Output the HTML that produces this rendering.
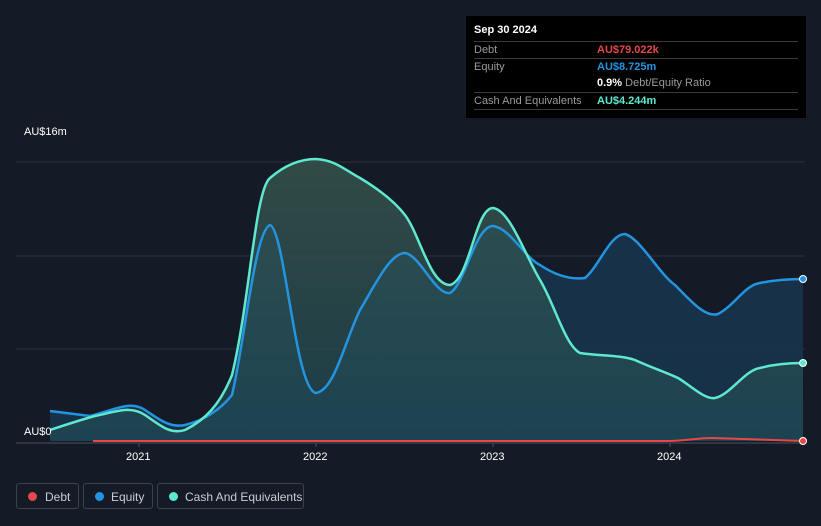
<!DOCTYPE html>
<html><head><style>
body{margin:0;background:#151b26;font-family:"Liberation Sans",sans-serif;}
.wrap{position:relative;width:821px;height:526px;overflow:hidden;background:#151b26}
.tt{position:absolute;left:466px;top:16px;width:340px;height:102px;background:#000;color:#fff;font-size:11px}
.tt .row{position:absolute;left:8px;width:324px;border-top:1px solid #3a3a3a;height:16px;line-height:16px;color:#9a9a9a}
.tt .v{position:absolute;left:123px;font-weight:bold}
.leg{position:absolute;top:483px;height:26px;border:1px solid #3c4350;border-radius:3px;color:#c9ccd2;font-size:12px;line-height:26px;box-sizing:border-box}
.leg i{position:absolute;top:8px;left:11px;width:9px;height:9px;border-radius:50%}
</style></head><body><div class="wrap">
<svg width="821" height="526" style="position:absolute;left:0;top:0">
<defs><linearGradient id="cg" x1="0" y1="0" x2="0" y2="1"><stop offset="0" stop-color="#3a5a50" stop-opacity=".75"/><stop offset="1" stop-color="#1f4a55" stop-opacity=".7"/></linearGradient></defs>
<g stroke="#2a303b" stroke-width="1"><line x1="16" y1="162" x2="805" y2="162"/><line x1="16" y1="256" x2="805" y2="256"/><line x1="16" y1="349" x2="805" y2="349"/></g>
<path d="M50,411 L90,416 C115,410 130,400 145,410 C160,420 170,428 185,425 C205,420 220,410 232,395 C245,340 255,230 270,225 C285,230 295,390 316,393 C335,390 345,340 360,310 C375,285 390,253 405,253 C420,255 435,295 450,293 C465,285 475,226 493,226 C510,228 525,258 540,265 C555,275 570,280 585,278 C600,265 610,234 625,234 C640,238 660,275 675,285 C690,300 705,318 718,314 C735,305 745,285 760,283 C775,280 790,279 803,279 L803,441 L50,441Z" fill="#17344d" opacity=".9"/>
<path d="M50,430 C65,425 80,420 95,416 C115,412 130,405 145,415 C160,425 170,435 185,430 C205,420 220,405 232,375 C250,300 255,190 270,178 C285,165 300,159 316,159 C335,160 345,170 360,178 C380,190 395,202 405,215 C420,235 430,285 450,285 C470,280 475,208 493,208 C510,210 525,255 540,280 C555,305 565,345 580,353 C600,356 620,355 635,360 C650,367 665,372 678,378 C690,385 705,400 715,398 C730,395 745,370 760,368 C775,364 790,363 803,363 L803,441 L50,441Z" fill="url(#cg)"/>
<path d="M50,411 L90,416 C115,410 130,400 145,410 C160,420 170,428 185,425 C205,420 220,410 232,395 C245,340 255,230 270,225 C285,230 295,390 316,393 C335,390 345,340 360,310 C375,285 390,253 405,253 C420,255 435,295 450,293 C465,285 475,226 493,226 C510,228 525,258 540,265 C555,275 570,280 585,278 C600,265 610,234 625,234 C640,238 660,275 675,285 C690,300 705,318 718,314 C735,305 745,285 760,283 C775,280 790,279 803,279" fill="none" stroke="#2394e0" stroke-width="2.5"/>
<path d="M50,430 C65,425 80,420 95,416 C115,412 130,405 145,415 C160,425 170,435 185,430 C205,420 220,405 232,375 C250,300 255,190 270,178 C285,165 300,159 316,159 C335,160 345,170 360,178 C380,190 395,202 405,215 C420,235 430,285 450,285 C470,280 475,208 493,208 C510,210 525,255 540,280 C555,305 565,345 580,353 C600,356 620,355 635,360 C650,367 665,372 678,378 C690,385 705,400 715,398 C730,395 745,370 760,368 C775,364 790,363 803,363" fill="none" stroke="#5ee8cf" stroke-width="2.5"/>
<path d="M93,441 L670,441 C690,440 700,438 712,438 C740,439 770,440 803,441" fill="none" stroke="#e54848" stroke-width="2"/>
<line x1="16" y1="443" x2="805" y2="443" stroke="#4a505a"/>
<g stroke="#4a505a"><line x1="139" y1="443" x2="139" y2="447"/><line x1="316" y1="443" x2="316" y2="447"/><line x1="493" y1="443" x2="493" y2="447"/><line x1="670" y1="443" x2="670" y2="447"/></g>
<circle cx="803" cy="279" r="3.5" fill="#2394e0" stroke="#fff" stroke-width="1"/>
<circle cx="803" cy="363" r="3.5" fill="#5ee8cf" stroke="#fff" stroke-width="1"/>
<circle cx="803" cy="441" r="3.5" fill="#e54848" stroke="#fff" stroke-width="1"/>
<g font-size="11" fill="#fff" font-family="Liberation Sans"><text x="24" y="135">AU$16m</text><text x="24" y="435">AU$0</text>
<text x="126" y="460">2021</text><text x="303" y="460">2022</text><text x="480" y="460">2023</text><text x="657" y="460">2024</text></g>
</svg>
<div class="tt">
<div style="position:absolute;left:8px;top:8px;font-weight:bold;font-size:11px">Sep 30 2024</div>
<div class="row" style="top:25px">Debt<span class="v" style="color:#e54848">AU$79.022k</span></div>
<div class="row" style="top:42px">Equity<span class="v" style="color:#2394e0">AU$8.725m</span></div>
<div class="row" style="top:59px;border:none"><span class="v" style="color:#fff">0.9%<span style="color:#9a9a9a;font-weight:normal"> Debt/Equity Ratio</span></span></div>
<div class="row" style="top:76px">Cash And Equivalents<span class="v" style="color:#5ee8cf">AU$4.244m</span></div>
<div class="row" style="top:93px;height:0"></div>
</div>
<div class="leg" style="left:16px;width:63px"><i style="background:#e54848"></i><span style="position:absolute;left:28px">Debt</span></div>
<div class="leg" style="left:83px;width:70px"><i style="background:#2394e0"></i><span style="position:absolute;left:27px">Equity</span></div>
<div class="leg" style="left:157px;width:147px"><i style="background:#5ee8cf"></i><span style="position:absolute;left:27px">Cash And Equivalents</span></div>
</div></body></html>
